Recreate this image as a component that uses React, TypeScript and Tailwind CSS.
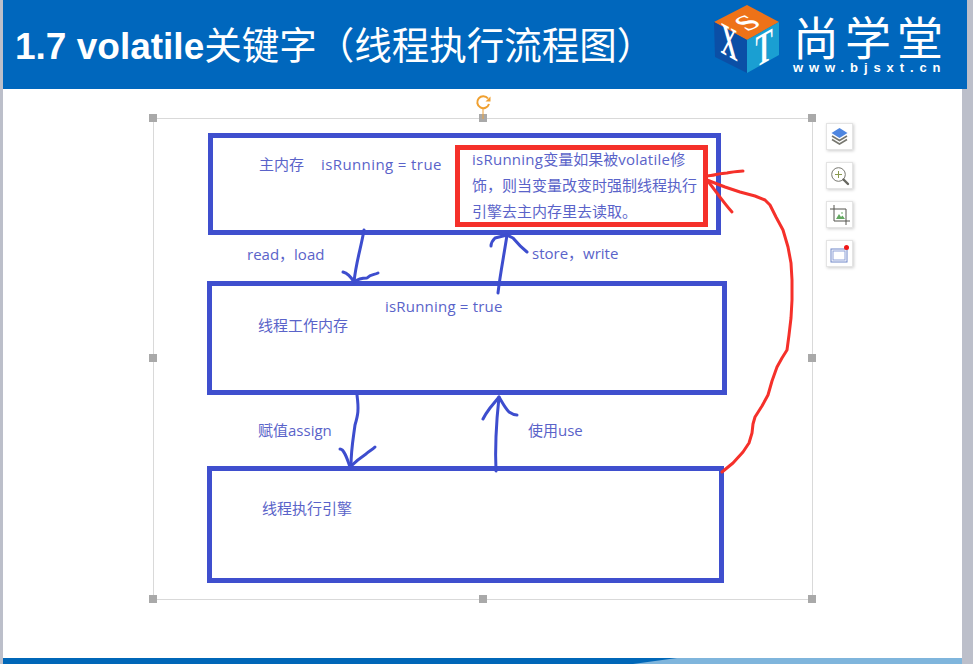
import React from 'react'

const Handle = ({ className }: { className: string }) => (
  <div className={`absolute h-2 w-2 bg-[#a9a9a9] ${className}`} />
)

const LayersIcon = () => (
  <svg width="19" height="19" viewBox="0 0 19 19">
    <path d="M9.5 1 17.5 6 9.5 11 1.5 6Z" fill="#4f86e0" />
    <path d="M2 9 9.5 13.5 17 9M2 12.5 9.5 17 17 12.5" fill="none" stroke="#77776f" strokeWidth="1.6" />
  </svg>
)

const ZoomIcon = () => (
  <svg width="20" height="20" viewBox="0 0 20 20" fill="none">
    <circle cx="8.5" cy="8.5" r="6.8" stroke="#77776f" strokeWidth="1" />
    <path d="M8.5 5v7M5 8.5h7" stroke="#8a9a50" strokeWidth="1" />
    <path d="M13.5 13.5 18 18" stroke="#66665f" strokeWidth="2.4" strokeLinecap="round" />
  </svg>
)

const CropIcon = () => (
  <svg width="20" height="20" viewBox="0 0 20 20" fill="none">
    <path d="M4 0v16h16M0 4h16v16" stroke="#55554f" strokeWidth="1" />
    <path d="M6 14l3-5 2 3 1.500-1.500L15 14Z" fill="#62a860" />
    <circle cx="12" cy="8" r="1" fill="#9cc89a" />
  </svg>
)

const FrameIcon = () => (
  <svg width="20" height="20" viewBox="0 0 20 20" fill="none">
    <rect x="1" y="5" width="16" height="13" stroke="#6f86c8" strokeWidth="1" />
    <rect x="3" y="7" width="12" height="9" stroke="#8fa2d8" strokeWidth="1" />
    <circle cx="16.500" cy="3.500" r="2.500" fill="#f01818" />
  </svg>
)

const Logo = () => (
  <svg width="66" height="70" viewBox="0 0 66 70" className="mb-[9px] shrink-0 overflow-visible">
    <path d="M33 0 65 17 33 35 0 17Z" fill="#ee7218" />
    <path d="M0 17 33 35V68L1 52Z" fill="#0b4fa6" />
    <path d="M65 17 33 35V68L65 50Z" fill="#1a9fd2" />
    <g fontFamily="'Liberation Serif', serif" fontWeight="700" fill="#fff" textAnchor="middle">
      <text transform="matrix(0.85 -0.42 0.75 0.5 41 23)" fontSize="32">S</text>
      <text transform="matrix(0.62 0.34 0 1.2 15 52)" fontSize="38">X</text>
      <text transform="matrix(0.68 -0.38 0 1.2 50 58)" fontSize="38">T</text>
    </g>
  </svg>
)

const tools = [LayersIcon, ZoomIcon, CropIcon, FrameIcon]

export default function App() {
  return (
    <div className="flex h-[664px] w-[973px] flex-col overflow-hidden bg-[#bcbfca]">
      <header className="ml-[3px] mr-[6px] flex h-[89px] shrink-0 items-center bg-[#0067bd] pl-3 pr-[18px] text-white">
        <h1 className="whitespace-nowrap text-[37px] leading-none">
          <span className="font-['Liberation_Sans',sans-serif] font-bold">1.7 volatile</span>
          <span className="font-['Noto_Sans_CJK_SC',sans-serif] text-[37.5px]">关键字（线程执行流程图）</span>
        </h1>
        <div className="ml-auto flex items-center gap-[13px]">
          <Logo />
          <div className="flex w-[156px] flex-col items-start pb-1">
            <div className="whitespace-nowrap font-['Noto_Sans_CJK_SC',sans-serif] text-[46px] leading-[50px] tracking-[6px]">尚学堂</div>
            <div className="whitespace-nowrap font-['Liberation_Sans',sans-serif] text-[13px] font-bold leading-4 tracking-[5.900px]">www.bjsxt.cn</div>
          </div>
        </div>
      </header>

      <main className="relative ml-[3px] mr-[11px] flex-1 bg-white">
        {/* selection frame with the diagram inside */}
        <div className="absolute left-[150px] top-[29px] flex h-[482px] w-[660px] flex-col border border-[#d9d9d9] pl-[53px] pt-[14px] font-['Open_Sans','Noto_Sans_CJK_SC',sans-serif] text-[15px] leading-5 text-[#5a63c9]">
          <div className="ml-px flex h-[102px] w-[513px] items-start border-[5px] border-[#3f4fce] pl-[46px] pr-[8px] pt-[7px]">
            <span className="mt-[9px] whitespace-nowrap">主内存</span>
            <span className="ml-[17px] mt-[9px] whitespace-nowrap tracking-[0.4px]">isRunning = true</span>
            <div className="ml-auto h-[82px] w-[253px] shrink-0 border-[5px] border-[#f5302a] bg-white pl-3 leading-[26px]">
              <div className="-mt-1">
                <p className="whitespace-nowrap">
                  <span className="tracking-[0.25px]">isRunning</span>变量如果被<span className="tracking-[0.25px]">volatile</span>修
                </p>
                <p className="whitespace-nowrap">饰，则当变量改变时强制线程执行</p>
                <p className="whitespace-nowrap">引擎去主内存里去读取。</p>
              </div>
            </div>
          </div>

          <div className="flex h-[46px] pt-[9px]">
            <span className="w-[325px] whitespace-nowrap pl-[40px]">read，load</span>
            <span className="-mt-px whitespace-nowrap">store，write</span>
          </div>

          <div className="flex h-[114px] w-[520px] flex-col border-[5px] border-[#3f4fce] pt-[11px] leading-[19px]">
            <span className="whitespace-nowrap pl-[173px] tracking-[0.2px]">isRunning = true</span>
            <span className="whitespace-nowrap pl-[46px]">线程工作内存</span>
          </div>

          <div className="flex h-[71px] pt-[25px]">
            <span className="w-[321px] whitespace-nowrap pl-[51px]">赋值assign</span>
            <span className="whitespace-nowrap">使用use</span>
          </div>

          <div className="h-[117px] w-[517px] border-[5px] border-[#3f4fce] pl-[50px] pt-[27px]">
            <span className="whitespace-nowrap">线程执行引擎</span>
          </div>

          <Handle className="-left-[5px] -top-[5px]" />
          <Handle className="-top-[5px] left-[325px]" />
          <Handle className="-right-1 -top-[5px]" />
          <Handle className="-left-[5px] top-[235px]" />
          <Handle className="-right-1 top-[235px]" />
          <Handle className="-bottom-1 -left-[5px]" />
          <Handle className="-bottom-1 left-[325px]" />
          <Handle className="-bottom-1 -right-1" />

          {/* hand drawn arrows */}
          <svg className="absolute inset-0 overflow-visible" width="658" height="480" viewBox="154 119 658 480" fill="none" strokeLinecap="round" strokeLinejoin="round">
            <g stroke="#3d4dce" strokeWidth="3">
              <path d="M364 230C361 248 356 262 354 282" />
              <path d="M343 272C347 273 351 277 354 282C359 278 364 278 367 278C371 274 374 275 378 273" />
              <path d="M498 293C500 275 504 255 507 235" />
              <path d="M491 246C491 242 493 240 495 238L507 235L513 238C518 244 522 248 527 252" />
              <path d="M357 395C359 410 358 415 355 425C353 440 351 450 351 466" />
              <path d="M340 449C344 449 347 458 350 467C355 462 360 458 366 454C369 451 372 450 375 447" />
              <path d="M496 471C495 450 496 425 499 397" />
              <path d="M483 419C485 415 487 412 490 408L499 397C502 402 505 408 509 412C512 414 515 415 517 415" />
            </g>
            <g stroke="#f5302a" strokeWidth="3">
              <path d="M722 472 733 463 743 452 749 443 752 433 753 424 755 417 762 406 768 395 772 381 777 367 782 358 787 350 789 335 791 318 792 300 792 280 791 263 788 247 783 230 776 217 770 205 765 200 755 196 740 192 725 187 707 180" />
              <path d="M707 176C713 176 720 173 727 173C733 172 738 171 743 171" />
              <path d="M707 180C715 190 723 202 732 212" />
            </g>
          </svg>

          {/* rotate handle */}
          <svg className="absolute -top-[24px] left-[319px]" width="20" height="24" viewBox="0 0 20 24" fill="none">
            <path d="M10 14v10" stroke="#eda23c" strokeWidth="1" />
            <path d="M15 3.500A6 6 0 1 0 16 9" stroke="#f0a030" strokeWidth="2" />
            <path d="M12.500 6.500h5v-5Z" fill="#f0a030" />
          </svg>
        </div>

        {/* side tools */}
        <div className="absolute left-[823px] top-[34px] flex flex-col gap-[12px]">
          {tools.map((Tool, i) => (
            <div key={i} className="flex h-[27px] w-[27px] items-center justify-center border border-[#e4e4e4] bg-white shadow-[1px_1px_3px_rgba(0,0,0,0.2)]">
              <Tool />
            </div>
          ))}
        </div>
      </main>

      <footer className="ml-[3px] mr-[11px] flex h-[6px] shrink-0 bg-[#0067b8]">
        <div className="ml-auto h-full w-[329px] bg-[#7fb5dc] [clip-path:polygon(44px_0,100%_0,100%_100%,0_100%)]" />
      </footer>
    </div>
  )
}
